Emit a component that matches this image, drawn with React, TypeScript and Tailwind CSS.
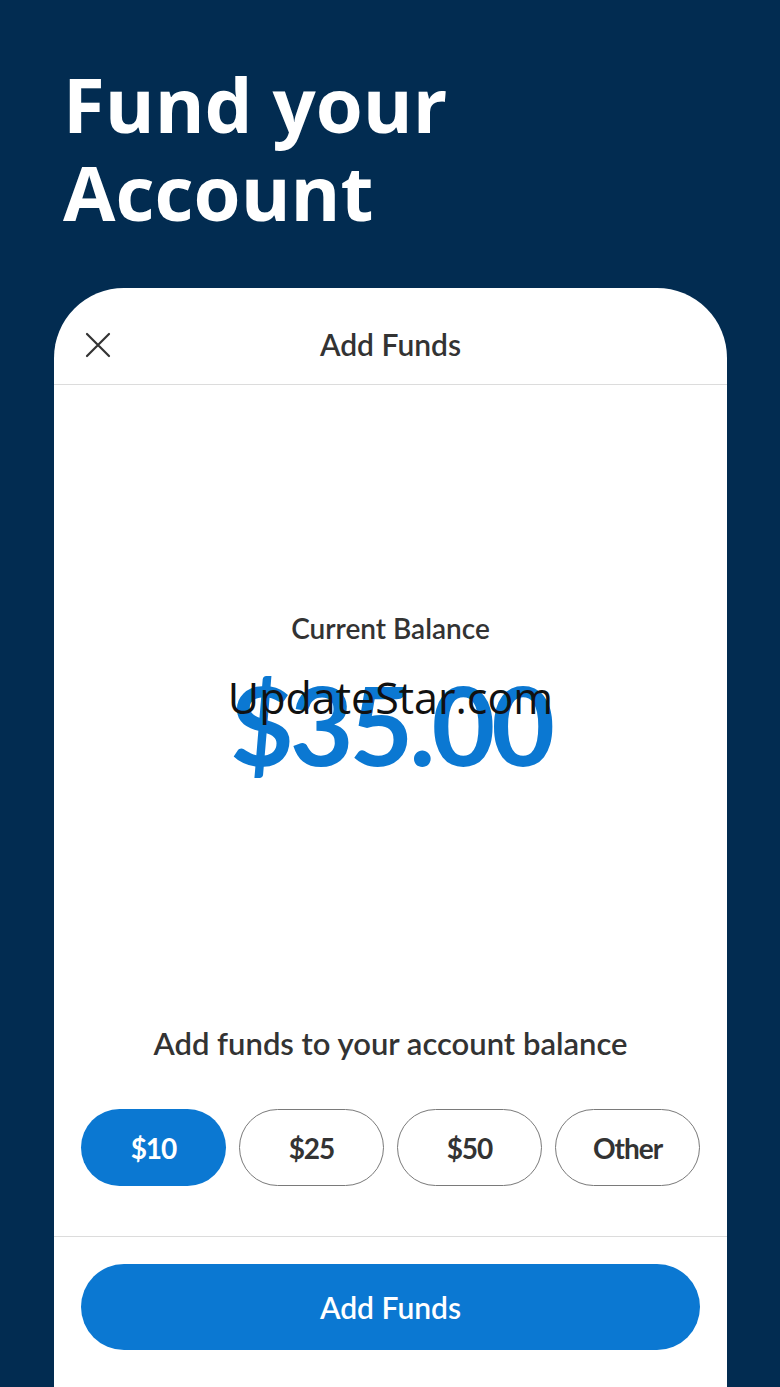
import React from "react";

const cardFont = { fontFamily: "Lato, 'Noto Sans', sans-serif" };

export default function App() {
  const amounts = ["$10", "$25", "$50", "Other"];
  return (
    <div className="w-[780px] h-[1387px] overflow-hidden bg-[#022c51] flex flex-col">
      <h1
        className="pt-[60px] pl-[63px] text-[76px] leading-[88px] font-bold text-white"
        style={{ fontFamily: "'Open Sans', sans-serif" }}
      >
        Fund your
        <br />
        Account
      </h1>
      <div
        className="mt-[52px] ml-[54px] w-[673px] flex-1 bg-white rounded-t-[70px] flex flex-col"
        style={cardFont}
      >
        <div className="relative h-[97px] border-b border-[#dcdcdc] flex items-center justify-center pt-[17px]">
          <svg
            className="absolute left-[31px] top-[44px]"
            width="26"
            height="26"
            viewBox="0 0 26 26"
            fill="none"
            stroke="#333"
            strokeWidth="2.2"
            strokeLinecap="round"
          >
            <path d="M2 2 L24 24 M24 2 L2 24" />
          </svg>
          <span className="text-[30px] font-semibold text-[#333]">Add Funds</span>
        </div>
        <div className="relative h-[851px] flex flex-col items-center">
          <div className="mt-[226px] text-[28px] leading-[34px] font-semibold text-[#333]">Current Balance</div>
          <div className="mt-[22px] text-[110px] leading-[112px] font-bold text-[#0b78d2] tracking-[-4px]">$35.00</div>
          <div
            className="absolute left-0 right-0 top-[285px] text-center text-[43px] leading-[56px] text-[#111]"
            style={{ fontFamily: "'Open Sans', sans-serif" }}
          >
            UpdateStar.com
          </div>
          <div className="mt-auto text-[31px] leading-[38px] font-semibold text-[#333]">
            Add funds to your account balance
          </div>
          <div className="mt-[47px] mb-[50px] w-full px-[27px] grid grid-cols-4 gap-[13px]">
            {amounts.map((a, i) => (
              <button
                key={a}
                className={
                  i === 0
                    ? "h-[77px] rounded-full bg-[#0b78d2] text-white text-[28px] font-bold tracking-[-1px]"
                    : "h-[77px] rounded-full border border-[#7a7a7a] bg-white text-[#333] text-[28px] font-bold tracking-[-1px]"
                }
              >
                {a}
              </button>
            ))}
          </div>
        </div>
        <div className="border-t border-[#dcdcdc] px-[27px] pt-[27px]">
          <button className="w-full h-[86px] rounded-full bg-[#0b78d2] text-white text-[30px] font-semibold">
            Add Funds
          </button>
        </div>
      </div>
    </div>
  );
}
